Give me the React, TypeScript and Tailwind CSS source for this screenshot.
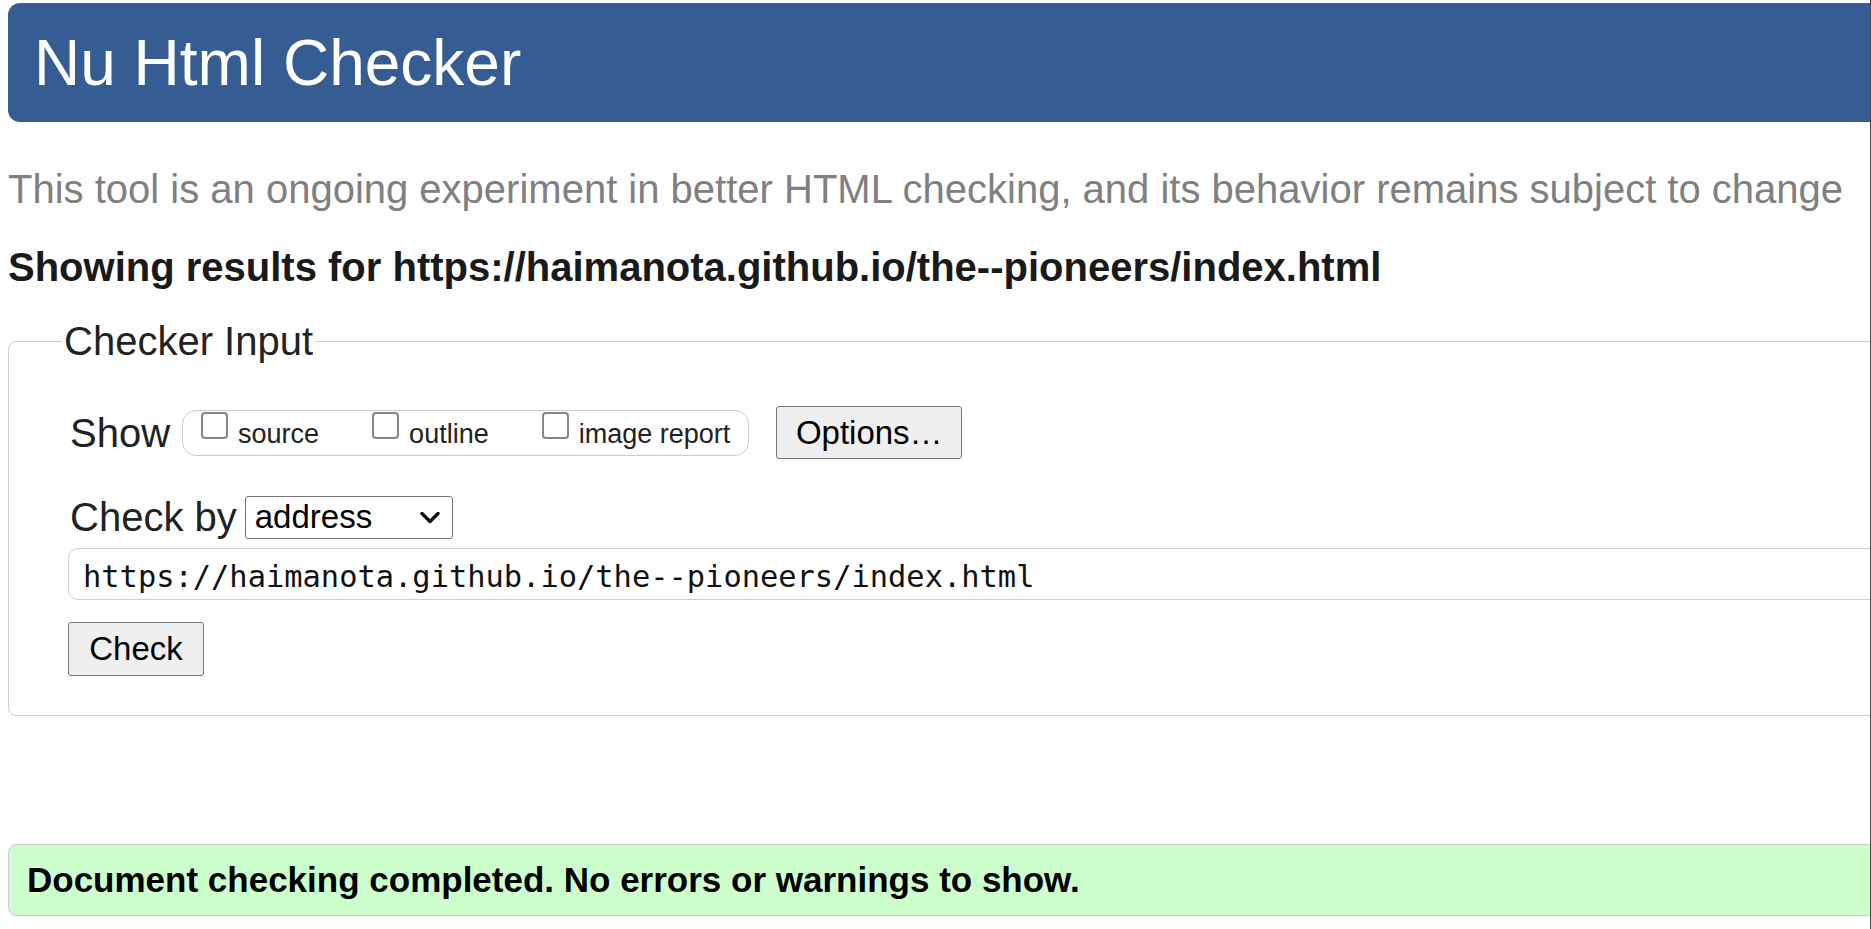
import React from "react";

function Box({ label }: { label: string }) {
  return (
    <label className="flex items-start">
      <span className="mt-[1px] block h-[27px] w-[27px] rounded-[4px] border-2 border-[#858585] bg-white" />
      <span className="ml-[10px] mt-[8px] text-[27px] leading-[31px] text-[#222]">{label}</span>
    </label>
  );
}

export default function App() {
  return (
    <div className="flex h-[929px] w-[1871px] overflow-hidden bg-white font-['Liberation_Sans',Arial,sans-serif] text-[#222]">
      <div className="w-[1870px] shrink-0 overflow-hidden">
        <div className="w-[1960px] pl-[8px] pt-[3px]">
          <header className="flex h-[119px] items-center rounded-[12px] bg-[#365d93] pl-[26px]">
            <h1 className="text-[64px] leading-[74px] text-white">Nu Html Checker</h1>
          </header>
          <p className="mt-[44px] text-[40px] leading-[46px] text-[#808080]">
            This tool is an ongoing experiment in better HTML checking, and its behavior remains subject to change
          </p>
          <p className="mt-[32px] text-[40px] font-bold leading-[46px] text-[#1a1a1a]">
            Showing results for https://haimanota.github.io/the--pioneers/index.html
          </p>
          <fieldset className="mt-[28px] rounded-[8px] border border-[#cfcfcf] pb-[39px] pl-[53px]">
            <legend className="px-[2px] text-[40px] leading-[46px] text-[#222]">Checker Input</legend>
            <div className="pl-[8px]">
              <div className="mt-[42px] flex items-center">
                <span className="text-[40px] leading-[46px]">Show</span>
                <div className="ml-[12px] flex h-[46px] items-start gap-[53px] rounded-[14px] border border-[#cccccc] pl-[18px] pr-[18px]">
                  <Box label="source" />
                  <Box label="outline" />
                  <Box label="image report" />
                </div>
                <button className="ml-[27px] h-[53px] w-[186px] rounded-[3px] border border-[#767676] bg-[#efefef] text-[33px] leading-[38px] text-black">
                  Options…
                </button>
              </div>
              <div className="mt-[35px] flex items-center">
                <span className="text-[40px] leading-[46px]">Check by</span>
                <div className="ml-[8px] flex h-[43px] w-[208px] items-center justify-between rounded-[3px] border border-[#767676] bg-white pl-[9px] pr-[12px]">
                  <span className="text-[33px] leading-[38px] text-black">address</span>
                  <svg width="20" height="13" viewBox="0 0 20 13">
                    <polyline points="2,2.5 10,10.5 18,2.5" stroke="#111" strokeWidth="3.4" fill="none" strokeLinecap="round" strokeLinejoin="round" />
                  </svg>
                </div>
              </div>
              <div className="-ml-[2px] mt-[8px] flex h-[52px] items-center rounded-[10px] border border-[#cfcfcf] pl-[14px] pt-[6px] font-['DejaVu_Sans_Mono',monospace] text-[30.4px] text-[#111]">
                https://haimanota.github.io/the--pioneers/index.html
              </div>
              <div className="-ml-[2px] mt-[22px]">
                <button className="block h-[54px] w-[136px] rounded-[3px] border border-[#767676] bg-[#efefef] text-[33px] leading-[38px] text-black">
                  Check
                </button>
              </div>
            </div>
          </fieldset>
          <div className="mt-[128px] flex h-[72px] items-center rounded-[8px] border border-[#cccccc] bg-[#ccffcc] pl-[18px] text-[35px] font-bold text-black">
            Document checking completed. No errors or warnings to show.
          </div>
        </div>
      </div>
      <div className="w-[1px] shrink-0 bg-[#4a4a4a]" />
    </div>
  );
}
